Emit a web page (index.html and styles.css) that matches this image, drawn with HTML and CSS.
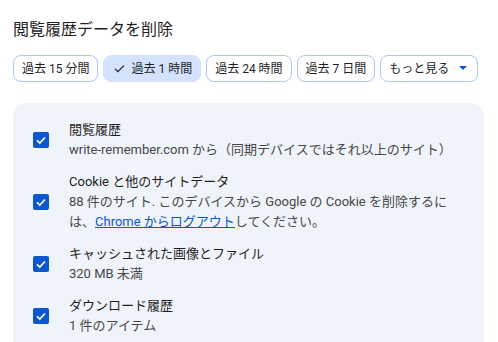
FILE: index.html
```html
<!DOCTYPE html>
<html lang="ja">
<head>
<meta charset="utf-8">
<link rel="stylesheet" href="styles.css">
</head>
<body>
<div class="dialog">
  <h1 class="title">閲覧履歴データを削除</h1>
  <div class="chips">
    <button class="chip">過去 15 分間</button>
    <button class="chip selected"><svg class="check" viewBox="0 0 16 16" width="13" height="13"><path d="M2.5 8.5 L6 12 L13.5 4.5" fill="none" stroke="#1f1f1f" stroke-width="1.5"/></svg>過去 1 時間</button>
    <button class="chip">過去 24 時間</button>
    <button class="chip">過去 7 日間</button>
    <button class="chip">もっと見る<svg class="caret" viewBox="0 0 10 6" width="8" height="5"><path d="M0 0 H10 L5 5 Z" fill="#0b57d0"/></svg></button>
  </div>
  <div class="panel">
    <div class="row">
      <span class="box"><svg viewBox="0 0 16 16" width="16" height="16"><path d="M4 8.3 L6.8 11 L12 5.5" fill="none" stroke="#fff" stroke-width="1.7"/></svg></span>
      <div class="text">
        <div class="label">閲覧履歴</div>
        <div class="sub">write-remember.com から（同期デバイスではそれ以上のサイト）</div>
      </div>
    </div>
    <div class="row">
      <span class="box"><svg viewBox="0 0 16 16" width="16" height="16"><path d="M4 8.3 L6.8 11 L12 5.5" fill="none" stroke="#fff" stroke-width="1.7"/></svg></span>
      <div class="text">
        <div class="label">Cookie と他のサイトデータ</div>
        <div class="sub">88 件のサイト. このデバイスから Google の Cookie を削除するには、<a class="link" href="#">Chrome からログアウト</a>してください。</div>
      </div>
    </div>
    <div class="row">
      <span class="box"><svg viewBox="0 0 16 16" width="16" height="16"><path d="M4 8.3 L6.8 11 L12 5.5" fill="none" stroke="#fff" stroke-width="1.7"/></svg></span>
      <div class="text">
        <div class="label">キャッシュされた画像とファイル</div>
        <div class="sub">320 MB 未満</div>
      </div>
    </div>
    <div class="row">
      <span class="box"><svg viewBox="0 0 16 16" width="16" height="16"><path d="M4 8.3 L6.8 11 L12 5.5" fill="none" stroke="#fff" stroke-width="1.7"/></svg></span>
      <div class="text">
        <div class="label">ダウンロード履歴</div>
        <div class="sub">1 件のアイテム</div>
      </div>
    </div>
  </div>
</div>
</body>
</html>
```
FILE: styles.css
```css
* { box-sizing: border-box; }
html, body { margin: 0; padding: 0; background: #fff; }
body {
  font-family: Roboto, "Noto Sans CJK JP", sans-serif;
  color: #1f1f1f;
  width: 498px;
  height: 342px;
  overflow: hidden;
}
.dialog { padding: 20px 13px 0 13px; }
.title {
  margin: 0;
  font-size: 16px;
  font-weight: 400;
  line-height: 20px;
  color: #1f1f1f;
}
.chips {
  display: flex;
  gap: 5px;
  margin-top: 15px;
}
.chip {
  display: flex;
  align-items: center;
  height: 27px;
  padding: 0 8px;
  border: 1px solid #a8c7fa;
  border-radius: 8px;
  background: #fff;
  font-family: inherit;
  font-size: 12px;
  color: #1f1f1f;
  line-height: 1;
  white-space: nowrap;
}
.chip.selected {
  background: #d3e3fd;
  border-color: #d3e3fd;
}
.check { margin-right: 5px; margin-left: 1px; }
.caret { margin-left: 10px; margin-right: 2px; }
.panel {
  margin-top: 21px;
  background: #eff3fa;
  border-radius: 14px;
  padding: 17px 30px 20px 20px;
  display: flex;
  flex-direction: column;
  gap: 12px;
  width: 471px;
}
.row {
  display: flex;
  align-items: center;
  gap: 20px;
}
.box {
  flex: none;
  width: 16px;
  height: 16px;
  border-radius: 2px;
  background: #0b57d0;
  display: flex;
}
.text { flex: 1; }
.label, .sub {
  font-size: 13px;
  line-height: 20px;
}
.label { color: #1f1f1f; }
.sub { color: #474747; }
.link { color: #0b57d0; text-decoration: underline; }
```
